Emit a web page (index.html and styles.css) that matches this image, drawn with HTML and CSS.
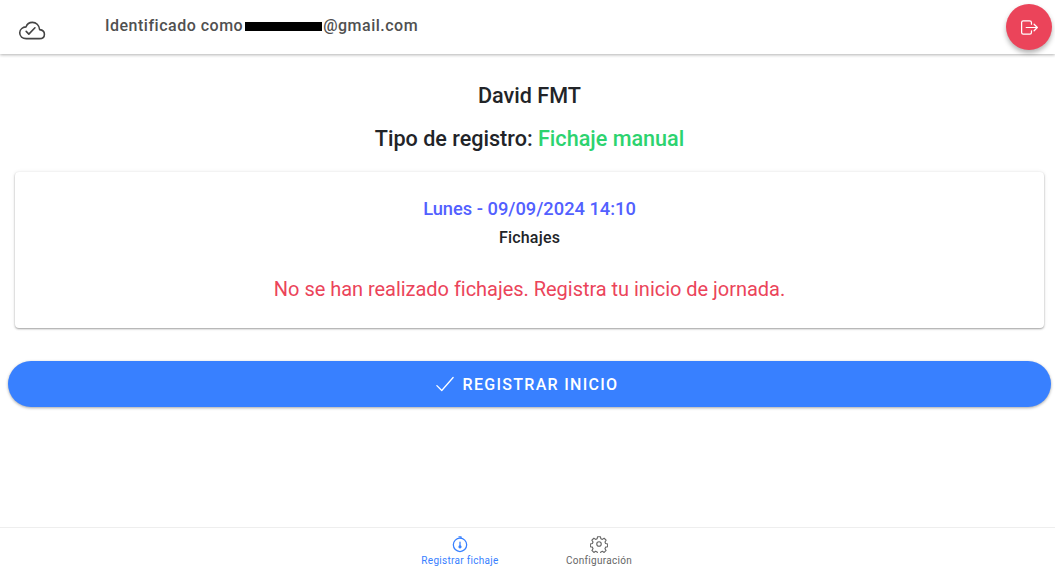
FILE: index.html
```html
<!DOCTYPE html>
<html lang="es">
<head>
  <meta charset="UTF-8" />
  <meta name="viewport" content="width=device-width, initial-scale=1.0"/>
  <title>Registrar fichaje</title>
  <link rel="stylesheet" href="styles.css">
</head>
<body>
  <div class="app">
    <header class="toolbar">
      <svg class="cloud-icon" viewBox="0 0 512 512" width="29" height="29" fill="none" stroke="currentColor" stroke-width="28" stroke-linecap="round" stroke-linejoin="round">
        <path d="M400 240c-8-80-64-128-128-128-60 0-99 40-112 80-53 5-112 38-112 104 0 64 52 104 116 104h232c53 0 88-27 88-80 0-53-48-76-84-80z"/>
        <path d="M317 208L209 320l-47-48"/>
      </svg>
      <p class="user-line">Identificado como<span class="redacted"></span>@gmail.com</p>
    </header>

    <button class="logout-fab" aria-label="Salir">
      <svg viewBox="0 0 512 512" width="21" height="21" fill="none" stroke="currentColor" stroke-width="30" stroke-linecap="round" stroke-linejoin="round">
        <path d="M304 336v40a40 40 0 01-40 40H104a40 40 0 01-40-40V136a40 40 0 0140-40h152c22 0 48 18 48 40v40"/>
        <path d="M368 336l80-80-80-80M176 256h256"/>
      </svg>
    </button>

    <main class="content">
      <h2 class="user-name">David FMT</h2>
      <h3 class="record-type">Tipo de registro: <span class="manual">Fichaje manual</span></h3>

      <section class="card">
        <div class="card-date">Lunes - 09/09/2024 14:10</div>
        <div class="card-title">Fichajes</div>
        <p class="card-empty">No se han realizado fichajes. Registra tu inicio de jornada.</p>
      </section>

      <button class="register-btn">
        <svg viewBox="0 0 512 512" width="26" height="26" fill="none" stroke="currentColor" stroke-width="26" stroke-linecap="round" stroke-linejoin="round">
          <path d="M416 128L192 384l-96-96"/>
        </svg>
        REGISTRAR INICIO
      </button>
    </main>

    <nav class="tabbar">
      <a href="#" class="tab active">
        <svg viewBox="0 0 512 512" width="18" height="18" fill="none" stroke="currentColor" stroke-width="36" stroke-linecap="round" stroke-linejoin="round">
          <circle cx="256" cy="280" r="190"/>
          <path d="M256 200v130M226 50h60v40"/>
          <circle cx="256" cy="336" r="28" fill="currentColor"/>
        </svg>
        <span>Registrar fichaje</span>
      </a>
      <a href="#" class="tab">
        <svg viewBox="0 0 512 512" width="18" height="18" fill="none" stroke="currentColor" stroke-width="32" stroke-linecap="round" stroke-linejoin="round">
          <circle cx="256" cy="256" r="64"/>
          <path d="M216 48h80l12 58 44 18 50-32 56 56-32 50 18 44 58 12v80l-58 12-18 44 32 50-56 56-50-32-44 18-12 58h-80l-12-58-44-18-50 32-56-56 32-50-18-44-58-12v-80l58-12 18-44-32-50 56-56 50 32 44-18z"/>
        </svg>
        <span>Configuración</span>
      </a>
    </nav>
  </div>
</body>
</html>
```

FILE: styles.css
```css
* {
  box-sizing: border-box;
}

html, body {
  height: 100%;
}

body {
  margin: 0;
  font-family: Roboto, "Liberation Sans", sans-serif;
  background-color: #fff;
  color: #222428;
  overflow: hidden;
}

.app {
  position: relative;
  display: flex;
  flex-direction: column;
  height: 100%;
}

.toolbar {
  display: flex;
  align-items: center;
  height: 54px;
  padding-left: 17px;
  background-color: #fff;
  box-shadow: 0 1px 3px rgba(0, 0, 0, 0.3);
}

.cloud-icon {
  color: #444;
  margin-top: 6px;
}

.user-line {
  margin: -3px 0 0 59px;
  font-size: 16px;
  font-weight: 500;
  letter-spacing: 0.5px;
  color: #505050;
}

.redacted {
  display: inline-block;
  width: 77px;
  height: 9px;
  margin: 0 1px 0 2px;
  background-color: #000;
}

.logout-fab {
  position: absolute;
  top: 4px;
  right: 3px;
  display: flex;
  align-items: center;
  justify-content: center;
  width: 46px;
  height: 46px;
  padding: 0;
  border: none;
  border-radius: 50%;
  color: #fff;
  background-color: #eb445a;
  box-shadow: 0 3px 5px rgba(0, 0, 0, 0.3);
}

.content {
  flex: 1;
  padding: 0 4px 0 8px;
  text-align: center;
}

.user-name {
  margin: 29px 0 0;
  font-size: 21.6px;
  line-height: 25px;
  font-weight: 500;
}

.record-type {
  margin: 18px 0 0;
  font-size: 21.6px;
  line-height: 25px;
  font-weight: 500;
}

.manual {
  color: #2dd36f;
}

.card {
  height: 156px;
  margin: 21px 7px 0;
  padding-top: 26px;
  border-radius: 4px;
  background-color: #fff;
  box-shadow: 0 1px 2px rgba(0, 0, 0, 0.35), 0 0 4px rgba(0, 0, 0, 0.08);
}

.card-date {
  font-size: 18.3px;
  line-height: 22px;
  font-weight: 500;
  color: #5260ff;
}

.card-title {
  margin-top: 8px;
  font-size: 16px;
  line-height: 20px;
  font-weight: 500;
  letter-spacing: 0.2px;
}

.card-empty {
  margin: 28px 0 0;
  font-size: 20px;
  line-height: 26px;
  letter-spacing: -0.03px;
  color: #eb445a;
}

.register-btn {
  display: flex;
  align-items: center;
  justify-content: center;
  gap: 5px;
  width: 100%;
  height: 46px;
  margin-top: 33px;
  padding: 0 9px 0 0;
  border: none;
  border-radius: 23px;
  font-family: inherit;
  font-size: 16px;
  font-weight: 500;
  letter-spacing: 1.3px;
  color: #fff;
  background-color: #3880ff;
  box-shadow: 0 1px 3px rgba(0, 0, 0, 0.35);
}

.tabbar {
  display: flex;
  justify-content: center;
  height: 45px;
  padding-left: 4px;
  border-top: 1px solid #eee;
  background-color: #fff;
}

.tab {
  display: flex;
  flex-direction: column;
  align-items: center;
  width: 139px;
  padding-top: 7px;
  text-decoration: none;
  font-size: 10px;
  letter-spacing: 0.3px;
  color: #666;
}

.tab span {
  margin-top: 2px;
}

.tab.active {
  color: #3880ff;
}
```
